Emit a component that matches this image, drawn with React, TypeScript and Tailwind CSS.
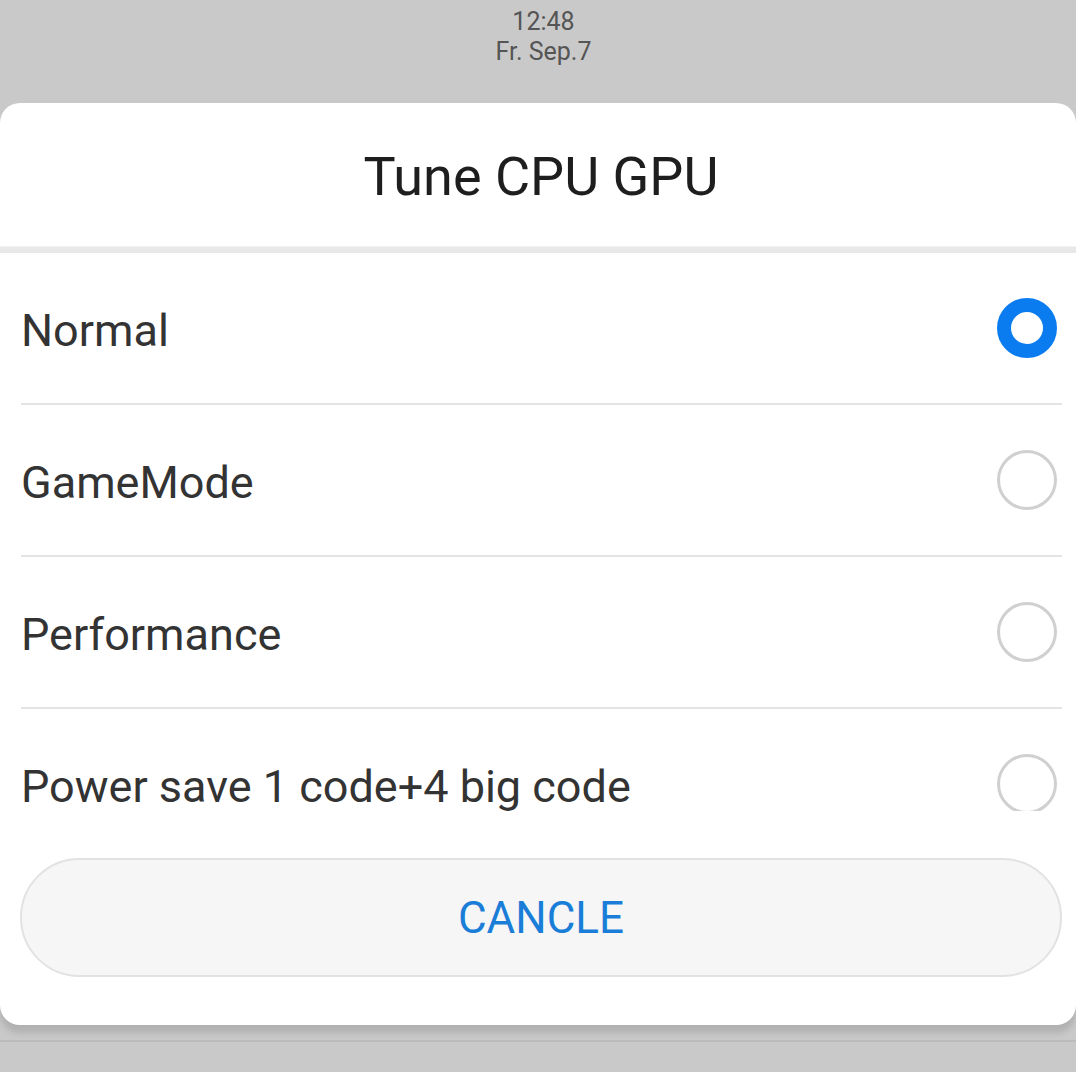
import { useState } from 'react';

const options = ['Normal', 'GameMode', 'Performance', 'Power save 1 code+4 big code'];

const Radio: React.FC<{ checked: boolean }> = ({ checked }) => (
  <div
    className={`w-[60px] h-[60px] rounded-full shrink-0 ${
      checked ? 'border-[14px] border-[#0a7cf0]' : 'border-[3px] border-[#d0d0d0]'
    }`}
  />
);

export default function App() {
  const [selected, setSelected] = useState(0);

  return (
    <div className="w-[1076px] h-[1072px] bg-[#c9c9c9] overflow-hidden flex flex-col" style={{ fontFamily: 'Roboto, "Liberation Sans", sans-serif' }}>
      {/* Status / lock header */}
      <div className="h-[103px] flex flex-col items-center pt-[7px] pl-[11px] text-[#555] text-[25px] leading-[30px]">
        <span>12:48</span>
        <span>Fr. Sep.7</span>
      </div>

      {/* Dialog */}
      <div className="bg-white rounded-[20px] shadow-[0_8px_6px_rgba(0,0,0,0.12)] flex flex-col">
        <div className="h-[143px] flex items-center justify-center">
          <h1 className="text-[54px] text-[#1e1e1e] leading-none pt-[4px] pl-[6px]">Tune CPU GPU</h1>
        </div>
        <div className="h-[7px] bg-[#e8e8e8] border-t border-[#f2f2f2]" />

        {/* Options list */}
        <div className="h-[558px] overflow-hidden">
          {options.map((label, i) => (
            <div key={label} className="ml-[21px] mr-[14px] border-b-2 border-[#e4e4e4]">
              <button
                onClick={() => setSelected(i)}
                className="w-full h-[150px] flex items-center justify-between pr-[5px] text-left"
              >
                <span className="text-[45px] text-[#333] leading-none pt-[4px]">{label}</span>
                <Radio checked={selected === i} />
              </button>
            </div>
          ))}
        </div>

        {/* Cancel */}
        <div className="pl-[20px] pr-[14px] pt-[47px] pb-[48px]">
          <button className="w-full h-[119px] rounded-full bg-[#f6f6f6] border-2 border-[#e2e2e2] flex items-center justify-center">
            <span className="text-[44px] text-[#1a7ed8] leading-none">CANCLE</span>
          </button>
        </div>
      </div>

      <div className="mt-[15px] h-[2px] bg-[#bcbcbc]" />
    </div>
  );
}
